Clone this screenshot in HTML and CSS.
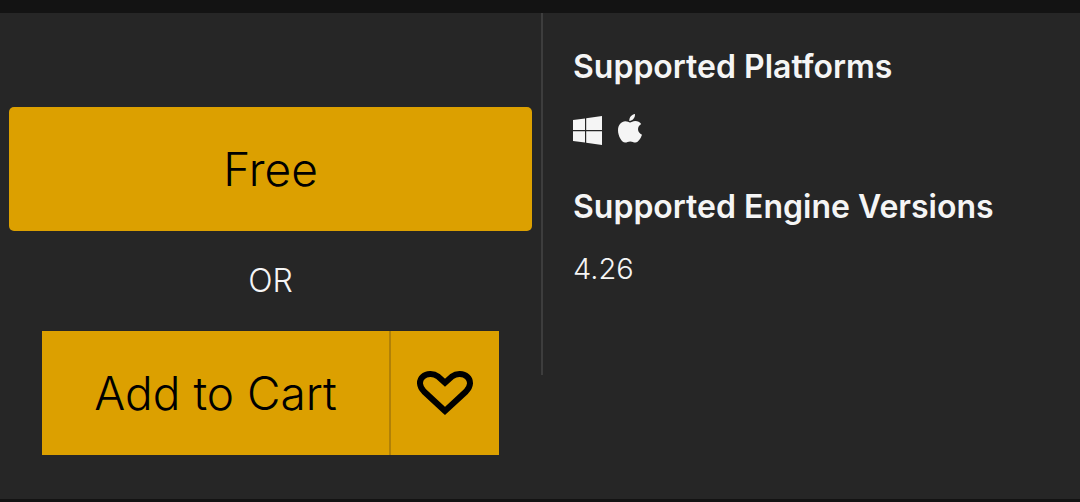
FILE: index.html
```html
<!DOCTYPE html>
<html lang="en">
<head>
<meta charset="utf-8">
<meta name="viewport" content="width=device-width, initial-scale=1">
<title>Product purchase</title>
<link rel="stylesheet" href="styles.css">
</head>
<body>
<main class="panel">
  <section class="purchase">
    <button class="btn btn-free" type="button">Free</button>
    <p class="or">OR</p>
    <div class="cart">
      <button class="btn btn-cart" type="button">Add to Cart</button>
      <button class="btn btn-wish" type="button" aria-label="Add to wishlist">
        <svg class="heart" viewBox="0 0 56 46" aria-hidden="true"><path d="M28 41 L7 21.500 C2 16.500 1.800 10.500 5.800 6.800 C9.500 3.300 16.500 3 20.800 6.300 L28 12.700 L35.200 6.300 C39.500 3 46.500 3.300 50.200 6.800 C54.200 10.500 54 16.500 49 21.500 Z"/></svg>
      </button>
    </div>
  </section>
  <section class="details">
    <h2 class="title">Supported Platforms</h2>
    <div class="platforms">
      <svg class="windows" viewBox="0 0 29 31" role="img" aria-label="Windows"><path d="M0 6.100 L12 4.500 V16 H0Z M13.200 4.300 L29 2 V16 H13.200Z M0 17.200 H12 V28.600 L0 27Z M13.200 17.200 H29 V31 L13.200 28.800Z"/></svg>
      <svg class="apple" viewBox="0 0 24 31" role="img" aria-label="macOS"><path d="M17 0 C17.300 3.800 14.500 7 11.300 6.900 C11 3.500 13.800 .5 17 0Z M12 8.400 C13.200 8.400 14.800 7 17.300 7 C19.700 7 21.900 8.200 23.200 10.100 C18.500 12.800 19.300 18.900 24 20.800 C22.700 24.300 20.500 28.300 17.500 28.500 C15.500 28.600 14.600 27.400 12.300 27.400 C10 27.400 9 28.500 7.200 28.600 C3.800 28.700 0 22 0 16.300 C0 10.700 3.500 7.200 7.300 7.200 C9.500 7.200 11 8.400 12 8.400Z"/></svg>
    </div>
    <h2 class="title">Supported Engine Versions</h2>
    <p class="version">4.26</p>
  </section>
</main>
</body>
</html>
```
FILE: styles.css
```css
* { box-sizing: border-box; }
body {
  margin: 0;
  min-height: 100vh;
  display: flex;
  flex-direction: column;
  background: #131313;
  border-top: 13px solid #131313;
  border-bottom: 3px solid #131313;
  color: #f5f5f5;
  font-family: Inter, "Liberation Sans", sans-serif;
}
.panel {
  flex: 1;
  display: grid;
  grid-template-columns: 1fr 1fr;
  align-items: start;
  background: #262626;
}
.purchase {
  display: flex;
  flex-direction: column;
  padding: 94px 8px 44px 9px;
}
.btn {
  height: 124px;
  border: 0;
  padding: 0;
  background: #dca000;
  color: #000;
  font: inherit;
  font-size: 46px;
  font-weight: 300;
  cursor: pointer;
}
.btn-free { border-radius: 5px; }
.or {
  margin: 0;
  text-align: center;
  font-size: 32px;
  font-weight: 300;
  line-height: 100px;
}
.cart {
  display: flex;
  margin: 0 33px;
}
.btn-cart { flex: 1; }
.btn-wish {
  width: 110px;
  display: grid;
  place-items: center;
  border-left: 2px solid #b18107;
}
.heart {
  width: 56px;
  height: 46px;
  fill: none;
  stroke: #000;
  stroke-width: 6;
}
.details {
  margin-left: 1px;
  padding: 34px 30px 86px;
  border-left: 2px solid #3d3d3d;
}
.title {
  margin: 0;
  font-size: 32px;
  font-weight: 600;
  line-height: 40px;
}
.platforms {
  display: flex;
  align-items: center;
  gap: 16px;
  padding: 27px 0 42px;
  fill: #f5f5f5;
}
.windows { width: 29px; height: 31px; }
.apple { width: 24px; height: 31px; }
.version {
  margin: 22px 0 0;
  font-size: 29px;
  font-weight: 300;
  line-height: 40px;
}
```
